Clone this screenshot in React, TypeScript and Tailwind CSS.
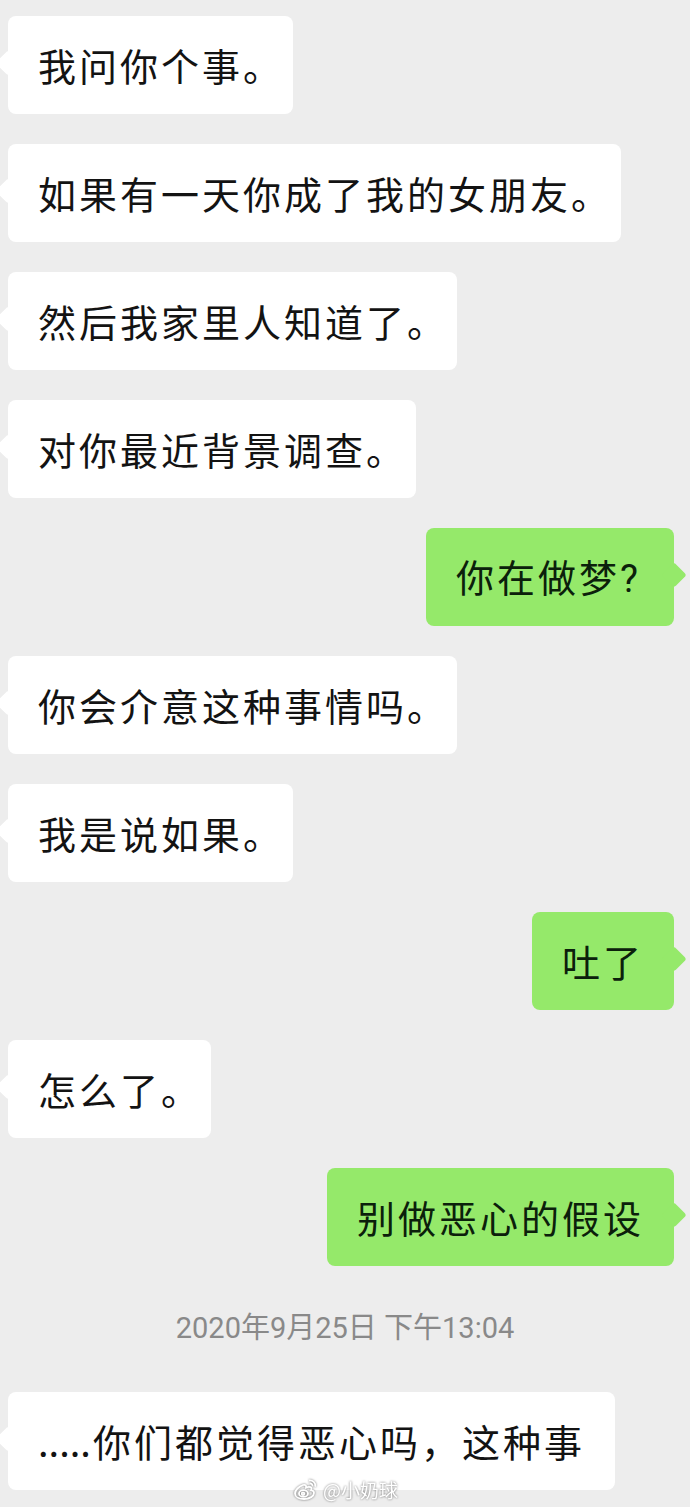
import React from 'react'

type Msg =
  | { kind: 'in'; text: React.ReactNode }
  | { kind: 'out'; text: React.ReactNode }
  | { kind: 'time'; text: string }

const Dot = () => <span className="inline-block w-[20px]">。</span>

const messages: Msg[] = [
  { kind: 'in', text: <>我问你个事<Dot /></> },
  { kind: 'in', text: <>如果有一天你成了我的女朋友<Dot /></> },
  { kind: 'in', text: <>然后我家里人知道了<Dot /></> },
  { kind: 'in', text: <>对你最近背景调查<Dot /></> },
  {
    kind: 'out',
    text: (
      <>
        你在做梦<span className="inline-block w-[24px] font-['Roboto',sans-serif]">?</span>
      </>
    ),
  },
  { kind: 'in', text: <>你会介意这种事情吗<Dot /></> },
  { kind: 'in', text: <>我是说如果<Dot /></> },
  { kind: 'out', text: '吐了' },
  { kind: 'in', text: <>怎么了<Dot /></> },
  { kind: 'out', text: '别做恶心的假设' },
  { kind: 'time', text: '2020年9月25日 下午13:04' },
  {
    kind: 'in',
    text: (
      <>
        <span className="inline-block w-[55px] tracking-normal">.....</span>你们都觉得恶心吗，这种事
      </>
    ),
  },
]

const Bubble: React.FC<{ mine: boolean; children: React.ReactNode }> = ({ mine, children }) => (
  <div className={mine ? 'self-end mr-[16px]' : 'self-start ml-[8px]'}>
    <div
      className={`relative h-[98px] rounded-[8px] px-[30px] flex items-center whitespace-nowrap text-[38px] tracking-[3px] leading-none ${
        mine ? 'bg-[#95e96a] text-[#0b200b]' : 'bg-white text-[#131313]'
      }`}
    >
      {/* tail */}
      <div
        className={`absolute top-[38px] w-[18px] h-[18px] rotate-45 rounded-[3px] ${
          mine ? 'right-[-9px] bg-[#95e96a]' : 'left-[-9px] bg-white'
        }`}
      />
      <span className="relative">{children}</span>
    </div>
  </div>
)

const WeiboLogo = () => (
  <svg width="26" height="22" viewBox="0 0 26 22" fill="none" stroke="#ffffff" strokeWidth="1.8">
    <path d="M10 7c-4 1.5-8 5-8 8.5C2 19 6 21 11 21c6 0 10-3 10-6 0-2-2-2.6-3-2.8 1-2 .6-3.4-2-3.4-1.4 0-2.6.6-3 .8.4-1.6-.2-3.4-3-2.6z" />
    <ellipse cx="10.5" cy="15.5" rx="4.5" ry="3.4" />
    <circle cx="10" cy="15.8" r="1.3" />
    <path d="M16 2.5c3.5-.6 7 2.2 6.2 6.2" />
    <path d="M16.5 5.5c1.8-.3 3.3 1 3 2.8" />
  </svg>
)

export default function App() {
  return (
    <div className="relative h-[1507px] overflow-hidden bg-[#ededed] font-['Noto_Sans_CJK_SC','Noto_Sans',sans-serif]">
      <div className="flex flex-col gap-[30px] pt-[16px]">
        {messages.map((m, i) =>
          m.kind === 'time' ? (
            <div
              key={i}
              className="h-[66px] flex items-center justify-center text-[29px] text-[#898989] font-['Roboto','Noto_Sans_CJK_SC',sans-serif]"
            >
              {m.text}
            </div>
          ) : (
            <Bubble key={i} mine={m.kind === 'out'}>
              {m.text}
            </Bubble>
          )
        )}
      </div>

      {/* watermark */}
      <div className="absolute left-[293px] top-[1478px] flex items-center gap-[4px] text-white text-[19px] leading-none [filter:drop-shadow(0_0_1px_rgba(0,0,0,0.55))]">
        <WeiboLogo />
        <span>@小奶球</span>
      </div>
    </div>
  )
}
